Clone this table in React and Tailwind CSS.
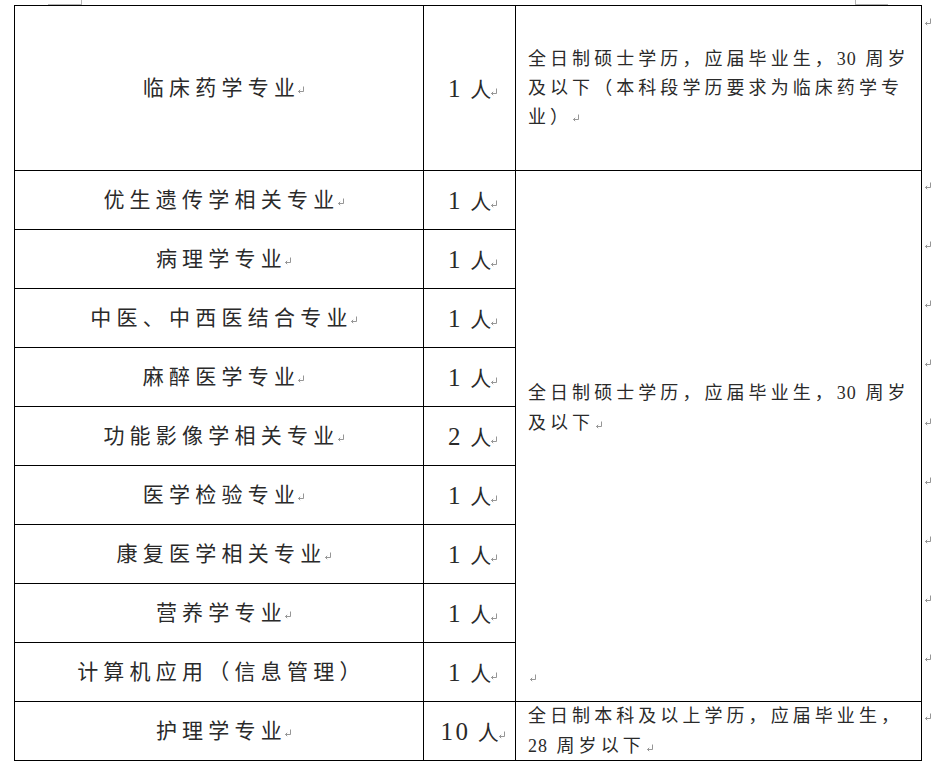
import { Fragment } from "react";

const majors = [
  ["优生遗传学相关专业", "1", true],
  ["病理学专业", "1", true],
  ["中医、中西医结合专业", "1", true],
  ["麻醉医学专业", "1", true],
  ["功能影像学相关专业", "2", true],
  ["医学检验专业", "1", true],
  ["康复医学相关专业", "1", true],
  ["营养学专业", "1", true],
  ["计算机应用（信息管理）", "1", false],
];

function Mark({ className = "" }) {
  return (
    <svg width="8" height="8" viewBox="0 0 8 8" className={className}>
      <path d="M6.5 0.5V5.5H1.5M3.2 3.8L1.5 5.5L3.2 7.2" fill="none" stroke="#8a8a8a" strokeWidth="0.9" />
    </svg>
  );
}

function Tail() {
  return (
    <span className="inline-block w-0 align-baseline">
      <Mark className="inline-block -ml-[3px]" />
    </span>
  );
}

function NameCell({ name, mark }) {
  return (
    <div className="flex items-center justify-center border-r border-b border-black">
      <span className="pl-[5px] text-[21px] tracking-[5.25px] leading-none whitespace-nowrap">
        {name}
        {mark && <Tail />}
      </span>
    </div>
  );
}

function CountCell({ n }) {
  return (
    <div className="flex items-center justify-center border-r border-b border-black">
      <span className="pl-[2px] text-[21px] tracking-[2px] leading-none whitespace-nowrap">
        <span className="text-[25px] tracking-[2.5px]">{n}</span> 人<Tail />
      </span>
    </div>
  );
}

export default function App() {
  return (
    <div className="w-[932px] h-[769px] bg-white text-[#2a2a2a] font-['Liberation_Serif','Noto_Sans_CJK_SC',serif] overflow-hidden">
      <div className="flex h-[5px]">
        <span className="ml-[48px] w-[34px] h-[5px] border-b border-r border-[#b5b5b5]" />
        <span className="ml-[773px] w-[33px] h-[5px] border-b border-l border-[#b5b5b5]" />
      </div>
      <div className="flex">
        <div className="ml-[14px] grid w-fit grid-cols-[409px_92px_406px] grid-rows-[165px_repeat(10,59px)] border-l border-t border-black">
          <NameCell name="临床药学专业" mark />
          <CountCell n="1" />
          <div className="flex items-center border-r border-b border-black pl-[12px]">
            <p className="text-[18px] leading-[29px] tracking-[4.06px] whitespace-nowrap">
              全日制硕士学历，应届毕业生，<span className="tracking-[1px]">30</span> 周岁
              <br />
              及以下（本科段学历要求为临床药学专
              <br />
              业）
              <Mark className="inline-block" />
            </p>
          </div>

          {majors.map(([name, n, mark], i) => (
            <Fragment key={name}>
              <NameCell name={name} mark={mark} />
              <CountCell n={n} />
              {i === 0 && (
                <div className="row-span-9 flex flex-col border-r border-b border-black pl-[12px] pt-[207px] pb-[19px]">
                  <p className="text-[18px] leading-[30px] tracking-[4.06px] whitespace-nowrap">
                    全日制硕士学历，应届毕业生，<span className="tracking-[1px]">30</span> 周岁
                    <br />
                    及以下
                    <Mark className="inline-block ml-[1px]" />
                  </p>
                  <Mark className="mt-auto ml-[1px]" />
                </div>
              )}
            </Fragment>
          ))}

          <NameCell name="护理学专业" mark />
          <CountCell n="10" />
          <div className="flex items-center border-r border-b border-black pl-[12px]">
            <p className="text-[18px] leading-[30px] tracking-[4.06px] whitespace-nowrap">
              全日制本科及以上学历，应届毕业生，
              <br />
              <span className="tracking-[1px]">28</span> 周岁以下
              <Mark className="inline-block ml-[1px]" />
            </p>
          </div>
        </div>

        <div className="ml-[2px] flex flex-col pt-[1px]">
          <div className="h-[165px] pt-[12px]"><Mark /></div>
          {Array.from({ length: 10 }).map((_, i) => (
            <div key={i} className="h-[59px] pt-[11px]"><Mark /></div>
          ))}
        </div>
      </div>
    </div>
  );
}
